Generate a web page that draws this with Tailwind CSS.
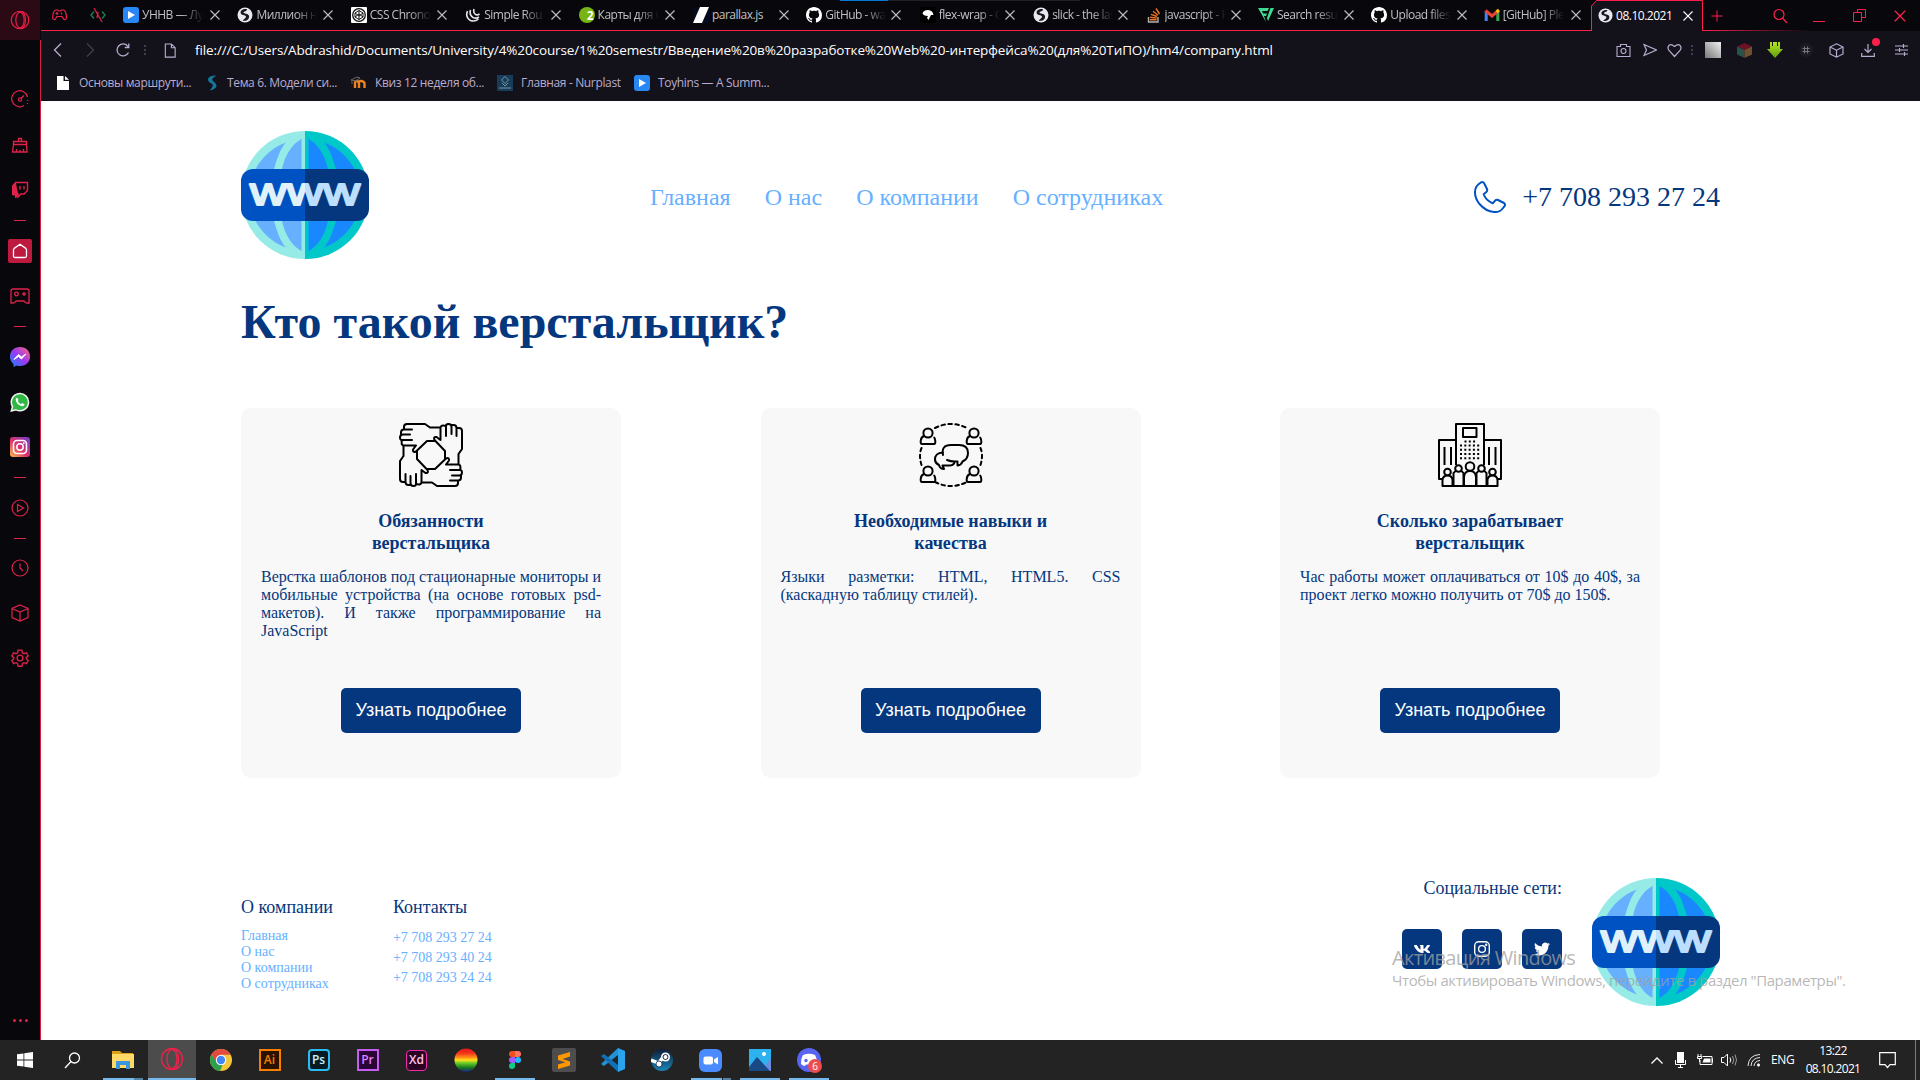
<!DOCTYPE html>
<html lang="ru">
<head>
<meta charset="utf-8">
<title>08.10.2021</title>
<script src="https://cdn.jsdelivr.net/npm/@tailwindcss/browser@4"></script>
</head>
<body class="w-[1920px] h-[1080px] overflow-hidden bg-[#08080c] flex flex-col font-['Open_Sans',sans-serif]">

<!-- Shared icons -->
<svg width="0" height="0" class="absolute">
  <defs>
    <linearGradient id="wwwFill" gradientUnits="userSpaceOnUse" x1="0" y1="0" x2="128" y2="0"><stop offset=".5" stop-color="#e0f1fa"/><stop offset=".5" stop-color="#bddfff"/></linearGradient>
    <linearGradient id="silver" x1="0" y1="1" x2="1" y2="0"><stop stop-color="#777"/><stop offset="1" stop-color="#f0f0f0"/></linearGradient>
    <linearGradient id="insta" x1="0" y1="1" x2="1" y2="0"><stop stop-color="#fdc04b"/><stop offset=".45" stop-color="#e1306c"/><stop offset="1" stop-color="#6a3fd0"/></linearGradient>
    <linearGradient id="msg" x1="0" y1="1" x2="1" y2="0"><stop stop-color="#0a8cff"/><stop offset=".5" stop-color="#9a38f5"/><stop offset="1" stop-color="#ff6b70"/></linearGradient>
    <linearGradient id="rainbow" x1="0" y1="0" x2="0" y2="1"><stop stop-color="#e01b1b"/><stop offset=".2" stop-color="#f4321c"/><stop offset=".38" stop-color="#ff8a15"/><stop offset=".5" stop-color="#ffe11a"/><stop offset=".65" stop-color="#5bc628"/><stop offset=".85" stop-color="#15701b"/><stop offset="1" stop-color="#1b2a9c"/></linearGradient>
    <linearGradient id="steam" x1="0" y1="0" x2="0" y2="1"><stop stop-color="#101c38"/><stop offset="1" stop-color="#1b86b8"/></linearGradient>
    <linearGradient id="lime" x1="0" y1="0" x2="0" y2="1"><stop stop-color="#b4e620"/><stop offset="1" stop-color="#5e9c10"/></linearGradient>
  </defs>
  <symbol id="globe" viewBox="0 0 128 128">
    <path d="M64 0A64 64 0 0 0 64 128Z" fill="#96ebe6"/><path d="M64 0A64 64 0 0 1 64 128Z" fill="#00c8c8"/>
    <g fill="#66b0ff"><path d="M45 11.5C32 16 21 26 14.5 38H33C36 28 39 18 45 11.5ZM60.5 8C51 13 44 24 41 38H60.5Z"/><path d="M45 116.500C32 112 21 102 14.500 90H33C36 100 39 110 45 116.500ZM60.500 120C51 115 44 104 41 90H60.500Z"/></g>
    <g fill="#1988ff"><path d="M83 11.500C96 16 107 26 113.500 38H95C92 28 89 18 83 11.500ZM67.500 8C77 13 84 24 87 38H67.500Z"/><path d="M83 116.500C96 112 107 102 113.500 90H95C92 100 89 110 83 116.500ZM67.500 120C77 115 84 104 87 90H67.500Z"/></g>
    <path d="M64 38H12A12 12 0 0 0 0 50V78A12 12 0 0 0 12 90H64Z" fill="#0052c2"/><path d="M64 38H116A12 12 0 0 1 128 50V78A12 12 0 0 1 116 90H64Z" fill="#05377e"/>
    <text x="9" y="73.500" textLength="110" lengthAdjust="spacingAndGlyphs" font-family="Liberation Sans, sans-serif" font-size="38" fill="url(#wwwFill)" stroke="url(#wwwFill)" stroke-width="2" stroke-linejoin="round">www</text>
  </symbol>
  <symbol id="opera" viewBox="0 0 24 24"><g fill="none" stroke="currentColor" stroke-width="1.300"><circle cx="12" cy="12" r="10.500"/><ellipse cx="12" cy="12" rx="5" ry="9.500"/><path d="M14 1.800C20 5 20 19 14 22.200"/></g></symbol>
  <symbol id="x" viewBox="0 0 12 12"><path d="M1.500 1.500l9 9M10.500 1.500l-9 9" stroke="currentColor" stroke-width="1.100" fill="none"/></symbol>
  <symbol id="world" viewBox="0 0 16 16"><circle cx="8" cy="8" r="7.500" fill="#e8e8ee"/><path d="M10 2.200C7 1.500 3.500 3 3.600 5.500C3.700 8.500 8.500 7.800 9 9.500C9.300 11 7 12 5.500 13.500C10.500 15 12.500 11.500 12 8.800C11 6 7 7.200 6.500 5.500C6.800 4 10 4.500 10 2.200Z" fill="#16161e"/></symbol>
  <symbol id="github" viewBox="0 0 16 16"><path fill="#fff" d="M8 0C3.580 0 0 3.580 0 8c0 3.540 2.290 6.530 5.470 7.590.4.070.55-.17.55-.38 0-.19-.01-.82-.01-1.490-2.010.37-2.530-.49-2.690-.94-.09-.23-.48-.94-.82-1.130-.28-.15-.68-.52-.01-.53.63-.01 1.080.58 1.230.82.72 1.210 1.870.87 2.330.66.070-.52.28-.87.51-1.070-1.780-.2-3.640-.89-3.640-3.950 0-.87.31-1.590.82-2.150-.08-.2-.36-1.020.08-2.120 0 0 .67-.21 2.200.82.64-.18 1.320-.27 2-.27.68 0 1.360.09 2 .27 1.530-1.040 2.200-.82 2.200-.82.44 1.100.16 1.920.08 2.120.51.56.82 1.270.82 2.150 0 3.070-1.870 3.750-3.650 3.950.29.25.54.73.54 1.480 0 1.070-.01 1.930-.01 2.200 0 .21.15.46.55.38A8.010 8.010 0 0 0 16 8c0-4.420-3.580-8-8-8z"/></symbol>
  <symbol id="play" viewBox="0 0 16 16"><rect width="16" height="16" rx="3" fill="#2787f5"/><path d="M5 4l7 4-7 4z" fill="#fff"/></symbol>
  <symbol id="file" viewBox="0 0 14 16"><path d="M2 1h6.500L12.500 5v10H2zM8.500 1v4h4" fill="none" stroke="currentColor" stroke-width="1.200"/></symbol>
  <symbol id="person" viewBox="0 0 18 18"><g fill="none" stroke="#000" stroke-width="2"><circle cx="9" cy="6" r="4.600"/><path d="M5 9Q2 10 1.700 14Q1.500 17 3 17H15Q16.500 17 16.300 14Q16 11.500 15.200 10.500"/></g></symbol>
</svg>

<div class="flex h-[1040px]">
  <!-- Browser sidebar -->
  <aside class="w-[41px] shrink-0 bg-[#08080c] text-[#e0224a] flex flex-col">
    <div class="h-10 w-10 bg-[#2b0a16] flex items-center justify-center text-[#f0204a]"><svg class="size-5"><use href="#opera"/></svg></div>
    <div class="grow w-[41px] border-r border-[#d81c44] flex flex-col items-center">
      <div class="h-[82px] pt-[36px] flex items-center"><svg class="size-[18px]" viewBox="0 0 18 18" fill="none" stroke="currentColor" stroke-width="1.200"><path d="M13 15.500A8 8 0 1 1 16.500 7"/><circle cx="9" cy="9.500" r="1.600"/><path d="M10 8.500l3-3M16.800 10v1M16.500 13v1"/></svg></div>
      <div class="h-[45px] flex items-center"><svg class="size-[18px]" viewBox="0 0 18 18" fill="none" stroke="currentColor" stroke-width="1.300"><path d="M7.500 5V2.500h3V5M2.500 5.500h13v3h-13zM2.500 8.500L1.500 16h14.500l-.5-7.500M5.500 16v-3M9 16v-2M12.500 16v-3"/></svg></div>
      <div class="h-[45px] flex items-center"><svg class="size-[18px]" viewBox="0 0 18 18" fill="none" stroke="currentColor" stroke-width="1.400"><path d="M4.500 1.500h12v8l-3.500 3.500h-3L7 16v-3H4.500z"/><path d="M4.500 1.500L1.500 4.500v9.500h3V17l3-3" fill="currentColor" stroke-width="1"/><path d="M9 5v3.500M13 5v3.500"/></svg></div>
      <div class="h-[16px] flex items-center"><div class="h-px w-3 bg-current"></div></div>
      <div class="h-[45px] flex items-center"><div class="size-6 rounded-xs bg-[#be1a40] flex items-center justify-center"><svg class="size-4" viewBox="0 0 16 16" fill="none" stroke="#fff" stroke-width="1.300" stroke-linejoin="round"><path d="M3 14.500Q1.500 14.500 1.500 13V7Q1.500 6 2.200 5.400L8 1.200l5.800 4.200q.7.600.7 1.600v6q0 1.500-1.500 1.500z"/></svg></div></div>
      <div class="h-[45px] flex items-center"><svg class="w-5 h-4" viewBox="0 0 20 16" fill="none" stroke="currentColor" stroke-width="1.300"><path d="M3 1h14q2 0 2 2v12h-2q-2 0-3-2H6q-1 2-3 2H1V3q0-2 2-2z"/><circle cx="6.500" cy="6" r="1.800"/><path d="M12 6h4M14 4v4"/></svg></div>
      <div class="h-[16px] flex items-center"><div class="h-px w-3 bg-current"></div></div>
      <div class="h-[45px] flex items-center"><svg class="size-5" viewBox="0 0 20 20"><path d="M10 0C4 0 0 4 0 9.500C0 12.500 1.300 15 3.500 17V20L6.500 18.500Q8 19 10 19C16 19 20 15 20 9.500S16 0 10 0z" fill="url(#msg)"/><path d="M4 12.500l4.500-5 3 2.500 4.500-3-4.500 5-3-2.500z" fill="#fff" stroke="#fff"/></svg></div>
      <div class="h-[45px] flex items-center"><svg class="size-5" viewBox="0 0 20 20"><path d="M1.300 19l1.200-4.500a8.600 8.600 0 1 1 3.500 3.300z" fill="#2fb845" stroke="#f2f2f2" stroke-width="1.500"/><path d="M7 5.500L5.800 6.700C5.200 10.500 9.500 14.500 13 14.200L14.800 12.500 12.300 11l-1.200 1.200C9.500 11.500 8.500 10.500 7.800 9L8.600 8z" fill="#fff"/></svg></div>
      <div class="h-[45px] flex items-center"><svg class="size-5" viewBox="0 0 20 20"><rect width="20" height="20" rx="3" fill="url(#insta)"/><rect x="3.500" y="3.500" width="13" height="13" rx="3.500" fill="none" stroke="#fff" stroke-width="1.600"/><circle cx="10" cy="10" r="3.200" fill="none" stroke="#fff" stroke-width="1.500"/><circle cx="13.800" cy="6.200" r=".9" fill="#fff"/></svg></div>
      <div class="h-[16px] flex items-center"><div class="h-px w-3 bg-current"></div></div>
      <div class="h-[45px] flex items-center"><svg class="size-[18px]" viewBox="0 0 18 18" fill="none" stroke="currentColor" stroke-width="1.200"><circle cx="9" cy="9" r="8"/><path d="M6.500 5.500L12.500 9l-6 3.500z"/></svg></div>
      <div class="h-[16px] flex items-center"><div class="h-px w-3 bg-current"></div></div>
      <div class="h-[44px] flex items-center"><svg class="size-[18px]" viewBox="0 0 18 18" fill="none" stroke="currentColor" stroke-width="1.200"><circle cx="9" cy="9" r="8"/><path d="M9 4.500V9l3 3"/></svg></div>
      <div class="h-[45px] flex items-center"><svg class="size-[18px]" viewBox="0 0 18 18" fill="none" stroke="currentColor" stroke-width="1.200"><path d="M9 1l8 3.500v9L9 17l-8-3.500v-9zM1 4.500L9 8l8-3.500M9 8v9"/></svg></div>
      <div class="h-[45px] flex items-center"><svg class="size-[18px]" viewBox="0 0 24 24" fill="none" stroke="currentColor" stroke-width="1.800"><circle cx="12" cy="12" r="3.800"/><path d="M9.500 1.500h5l.7 3.500 2 1.200 3.300-1.200 2.500 4.200-2.700 2.300v1.500l2.700 2.300-2.500 4.200-3.300-1.200-2 1.200-.7 3.500h-5L8.800 19.500l-2-1.200-3.300 1.200L1 15.300 3.700 13v-1.500L1 9.200 3.500 5l3.300 1.200 2-1.200z"/></svg></div>
      <div class="mt-auto h-[40px] flex items-center gap-[3px]"><i class="size-[3px] rounded-full bg-current"></i><i class="size-[3px] rounded-full bg-current"></i><i class="size-[3px] rounded-full bg-current"></i></div>
    </div>
  </aside>

  <div class="w-[1879px] flex flex-col">
    <!-- Tab strip -->
    <div class="relative h-[31px] flex items-stretch text-xs tracking-[-0.5px] text-[#c0c0c4]">
      <div class="absolute left-[799px] top-0 h-px w-[48px] bg-[#0078d7]"></div>
      <div class="absolute left-[847px] top-0 h-px w-[192px] bg-[#222226]"></div>
      <div class="w-[76px] flex items-center gap-[23px] pl-[11px] border-b border-[#ff1f4b] text-[#f0204a]">
        <svg class="w-[15px] h-[12px] shrink-0" viewBox="0 0 15 12" fill="none" stroke="currentColor" stroke-width="1.200"><path d="M3.500 1h2l1 1h2l1-1h2q3 1 3 8.500q-2 2.500-3.500-.5l-1-1.500h-5L4 9Q2.500 12 .7 9.500Q.7 2 3.500 1z"/><path d="M3.500 4.500h3M5 3v3M9.500 3.500v2"/></svg>
        <svg class="size-4 shrink-0" viewBox="0 0 16 16" fill="none" stroke-width="1.400"><path d="M4 4.500L1 8l3 3.500M12 4.500L15 8l-3 3.500" stroke="#16804c"/><path d="M4 1l8 14M7 11l1-6" stroke="#d02045"/></svg>
      </div>
      <div class="w-[113.400px] pl-[6px] border-b border-[#ff1f4b] flex items-center"><svg class="size-4 shrink-0"><use href="#play"/></svg><span class="ml-[3px] w-[61px] overflow-hidden whitespace-nowrap mask-r-from-65%">УННВ — Лу</span><svg class="size-3 ml-[6px]"><use href="#x"/></svg></div>
      <div class="w-[113.400px] pl-[7px] border-b border-[#ff1f4b] flex items-center"><svg class="size-4 shrink-0"><use href="#world"/></svg><span class="ml-[3px] w-[61px] overflow-hidden whitespace-nowrap mask-r-from-65%">Миллион на</span><svg class="size-3 ml-[5px]"><use href="#x"/></svg></div>
      <div class="w-[113.400px] pl-[7px] border-b border-[#ff1f4b] flex items-center"><svg class="size-4 shrink-0" viewBox="0 0 16 16"><rect width="16" height="16" rx="1" fill="#fff"/><g fill="none" stroke="#111" stroke-width="1.300"><circle cx="8" cy="8" r="6.300"/><path d="M8 3.500l4 2.500v4l-4 2.500L4 10V6zM8 3.500V7M8 9v3.500M4 6l4 3 4-3M4 10l4-3 4 3" stroke-width="1"/></g></svg><span class="ml-[3px] w-[61px] overflow-hidden whitespace-nowrap mask-r-from-65%">CSS Chronol</span><svg class="size-3 ml-[5px]"><use href="#x"/></svg></div>
      <div class="w-[113.400px] pl-[8px] border-b border-[#ff1f4b] flex items-center"><svg class="size-4 shrink-0" viewBox="0 0 16 16" fill="none" stroke="#e4e4e8" stroke-width="1.600"><path d="M2.500 4Q0 10 5.500 13.500Q10 15 13.500 12M5.500 3Q4 8 8 10.500Q11 12 14 10M9 2Q8 6 10.500 7.500Q12.500 8.500 14.500 7"/></svg><span class="ml-[3px] w-[61px] overflow-hidden whitespace-nowrap mask-r-from-65%">Simple Rou</span><svg class="size-3 ml-[5px]"><use href="#x"/></svg></div>
      <div class="w-[113.400px] pl-[8px] border-b border-[#ff1f4b] flex items-center"><svg class="size-4 shrink-0" viewBox="0 0 16 16"><circle cx="8" cy="8" r="8" fill="#78b414"/><text x="11" y="12.500" text-anchor="middle" font-size="12" font-weight="bold" fill="#fff">2</text></svg><span class="ml-[3px] w-[61px] overflow-hidden whitespace-nowrap mask-r-from-65%">Карты для С</span><svg class="size-3 ml-[5px]"><use href="#x"/></svg></div>
      <div class="w-[113.400px] pl-[9px] border-b border-[#ff1f4b] flex items-center"><svg class="size-4 shrink-0" viewBox="0 0 16 16"><rect width="16" height="16" fill="#050a1c"/><path d="M7 0h9L9 16H0z" fill="#fff"/></svg><span class="ml-[3px] w-[61px] overflow-hidden whitespace-nowrap">parallax.js</span><svg class="size-3 ml-[5px]"><use href="#x"/></svg></div>
      <div class="w-[113.400px] pl-[9px] border-b border-[#ff1f4b] flex items-center"><svg class="size-4 shrink-0"><use href="#github"/></svg><span class="ml-[3px] w-[61px] overflow-hidden whitespace-nowrap mask-r-from-65%">GitHub - wa</span><svg class="size-3 ml-[4px]"><use href="#x"/></svg></div>
      <div class="w-[113.400px] pl-[9px] border-b border-[#ff1f4b] flex items-center"><svg class="size-4 shrink-0" viewBox="0 0 16 16"><rect width="16" height="16" fill="#000"/><path d="M2.500 6Q4 3 8 3Q13 3.500 13.500 8H11L8.500 13L7 11L8 9Q3 9 2.500 6z" fill="#fff"/></svg><span class="ml-[3px] w-[61px] overflow-hidden whitespace-nowrap mask-r-from-65%">flex-wrap - C</span><svg class="size-3 ml-[4px]"><use href="#x"/></svg></div>
      <div class="w-[113.400px] pl-[9px] border-b border-[#ff1f4b] flex items-center"><svg class="size-4 shrink-0"><use href="#world"/></svg><span class="ml-[3px] w-[61px] overflow-hidden whitespace-nowrap mask-r-from-65%">slick - the las</span><svg class="size-3 ml-[4px]"><use href="#x"/></svg></div>
      <div class="w-[113.400px] pl-[8px] border-b border-[#ff1f4b] flex items-center"><svg class="size-4 shrink-0" viewBox="0 0 16 16" fill="none" stroke-width="1.400"><path d="M2.500 10v5h9.500v-5" stroke="#b0b3b6"/><path d="M4 12.700h6.500M4.200 10.200l6.500.9M5 7.300l6 2.200M7 4.200l5 4M10 1.500l3.500 5.500" stroke="#f0741e"/></svg><span class="ml-[3px] w-[61px] overflow-hidden whitespace-nowrap mask-r-from-65%">javascript - H</span><svg class="size-3 ml-[4px]"><use href="#x"/></svg></div>
      <div class="w-[113.400px] pl-[7px] border-b border-[#ff1f4b] flex items-center"><svg class="size-4 shrink-0" viewBox="0 0 16 16"><path d="M0 1h11l-1.500 3H4l1.200 2.500H9L8 9H6l2 6zM12.500 1H16L10 14 9 11z" fill="#3fd992"/></svg><span class="ml-[3px] w-[61px] overflow-hidden whitespace-nowrap mask-r-from-65%">Search resul</span><svg class="size-3 ml-[5px]"><use href="#x"/></svg></div>
      <div class="w-[113.400px] pl-[7px] border-b border-[#ff1f4b] flex items-center"><svg class="size-4 shrink-0"><use href="#github"/></svg><span class="ml-[3px] w-[61px] overflow-hidden whitespace-nowrap mask-r-from-65%">Upload files</span><svg class="size-3 ml-[5px]"><use href="#x"/></svg></div>
      <div class="w-[113.400px] pl-[6px] border-b border-[#ff1f4b] flex items-center"><svg class="size-4 shrink-0" viewBox="0 0 16 16" fill="none" stroke-width="3"><path d="M2.200 14V4" stroke="#4285f4"/><path d="M13.800 14V4" stroke="#34a853"/><path d="M1.500 3.500L8 9l6.500-5.500" stroke="#ea4335"/><path d="M12.500 5l2.500-2" stroke="#fbbc04"/></svg><span class="ml-[3px] w-[61px] overflow-hidden whitespace-nowrap mask-r-from-65%">[GitHub] Ple</span><svg class="size-3 ml-[6px]"><use href="#x"/></svg></div>
      <div class="relative w-[112px] flex items-center pl-[7px] text-white">
        <svg class="absolute inset-0 w-[112px] h-[31px]" viewBox="0 0 112 31"><path d="M.5 31V6L5.500.5H111.500V31" fill="#13111a" stroke="#ff1f4b"/></svg>
        <svg class="relative size-[15px] shrink-0"><use href="#world"/></svg><span class="relative ml-[3px] w-[66px] whitespace-nowrap">08.10.2021</span><svg class="relative size-3"><use href="#x"/></svg>
      </div>
      <div class="grow flex items-center text-[#ff1f4b] bg-[linear-gradient(to_right,#ff1f4b,transparent_50%)] bg-[length:100%_1px] bg-no-repeat bg-bottom">
        <svg class="size-3 ml-[8px]" viewBox="0 0 12 12"><path d="M6 .5v11M.5 6h11" stroke="currentColor"/></svg>
        <svg class="size-4 ml-[49px]" viewBox="0 0 16 16" fill="none" stroke="currentColor" stroke-width="1.200"><circle cx="7" cy="6.500" r="5"/><path d="M10.500 10l4.500 5"/></svg>
        <div class="ml-[25px] mt-[11px] h-px w-3 bg-current"></div>
        <svg class="size-[13px] ml-[28px]" viewBox="0 0 13 13" fill="none" stroke="currentColor"><path d="M4.500 3.500v-3h8v8h-4M.5 3.500h8v9h-8z"/></svg>
        <svg class="size-[14px] ml-[27px]"><use href="#x"/></svg>
      </div>
    </div>

    <!-- Address bar -->
    <div class="h-[38px] bg-[#13111a] flex items-center text-[#b9adcf]">
      <svg class="w-[9px] h-[14px] ml-[12px]" viewBox="0 0 9 14" fill="none" stroke="currentColor" stroke-width="1.300"><path d="M8 .5L1.500 7 8 13.500"/></svg>
      <svg class="w-[9px] h-[14px] ml-[24px] text-[#433d50]" viewBox="0 0 9 14" fill="none" stroke="currentColor" stroke-width="1.300"><path d="M1 .5L7.500 7 1 13.500"/></svg>
      <svg class="size-[14px] ml-[21px]" viewBox="0 0 14 14" fill="none" stroke="currentColor" stroke-width="1.300"><path d="M12.500 9.500A6 6 0 1 1 12 3.500M12.800 .5v4h-4"/></svg>
      <svg class="w-[2px] h-[10px] ml-[14px]" viewBox="0 0 2 10" fill="#433d50"><path d="M0 0h2v2H0zM0 4h2v2H0zM0 8h2v2H0z"/></svg>
      <svg class="w-[14px] h-[15px] ml-[17px]"><use href="#file"/></svg>
      <span class="ml-[18px] w-[1090px] whitespace-nowrap text-[13.5px] tracking-[-0.12px] text-white">file:///C:/Users/Abdrashid/Documents/University/4%20course/1%20semestr/Введение%20в%20разработке%20Web%20-интерфейса%20(для%20ТиПО)/hm4/company.html</span>
      <div class="ml-auto pr-[12px] flex items-center">
        <svg class="size-[15px]" viewBox="0 0 15 15" fill="none" stroke="currentColor" stroke-width="1.100"><path d="M1 3.500h3.500v-2h6v2H14v10H1z"/><circle cx="7.500" cy="8" r="2.500"/></svg>
        <svg class="size-[14px] ml-[12px]" viewBox="0 0 14 14" fill="none" stroke="currentColor" stroke-width="1.200"><path d="M1 1.500L13.500 7 1 12.500 3.500 7z"/></svg>
        <svg class="size-[15px] ml-[10px]" viewBox="0 0 15 15" fill="none" stroke="currentColor" stroke-width="1.200"><path d="M7.500 13.500L2 7.500Q0 4.500 2 2.500T7.500 3.500Q11 .500 13 2.500T13 7.500z"/></svg>
        <svg class="w-[2px] h-[10px] ml-[9px]" viewBox="0 0 2 10" fill="#433d50"><path d="M0 0h2v2H0zM0 4h2v2H0zM0 8h2v2H0z"/></svg>
        <svg class="size-4 ml-[12px]" viewBox="0 0 16 16"><rect width="16" height="16" fill="url(#silver)"/></svg>
        <svg class="size-[15px] ml-[16px]" viewBox="0 0 15 15"><path d="M7.500 0L15 3.500 7.500 7 0 3.500z" fill="#6b1324"/><path d="M0 3.500L7.500 7v8L0 11.500z" fill="#28524a"/><path d="M15 3.500L7.500 7v8l7.500-3.500z" fill="#70502f"/></svg>
        <svg class="size-4 ml-[15px]" viewBox="0 0 16 16"><path d="M3 0h2v4h1V0h4v4h1V0h2v7h3l-8 9-8-9h3z" fill="url(#lime)"/></svg>
        <svg class="size-[14px] ml-[16px]" viewBox="0 0 14 14"><circle cx="7" cy="7" r="7" fill="#1c1b21"/><path d="M5.500 3.500v7M8.500 3.500v7M3.500 5.500h7M3.500 8.500h7" stroke="#77737f"/></svg>
        <svg class="size-[15px] ml-[16px]" viewBox="0 0 15 15" fill="none" stroke="currentColor" stroke-width="1.200"><path d="M7.500 .8L14 4v7l-6.500 3.200L1 11V4zM1 4l6.500 3.200L14 4M7.500 7.200v7"/></svg>
        <div class="relative ml-[17px]"><svg class="size-[14px]" viewBox="0 0 14 14" fill="none" stroke="currentColor" stroke-width="1.200"><path d="M7 1v8.500M3.500 6L7 9.500 10.500 6M.7 10v3.300h12.600V10"/></svg><i class="absolute left-[11px] -top-[5px] size-2 rounded-full bg-[#ff1f4b]"></i></div>
        <svg class="w-[13px] h-[12px] ml-[20px]" viewBox="0 0 13 12" fill="none" stroke="currentColor" stroke-width="1.100"><path d="M0 2h13M0 6h13M0 10h13M8.500 0v4M4.500 4v4M9.500 8v4"/></svg>
      </div>
    </div>

    <!-- Bookmarks -->
    <div class="h-[32px] pb-[4px] bg-[#13111a] flex items-center text-xs tracking-[-0.35px] whitespace-nowrap text-[#b9adcf]">
      <div class="w-[149px] pl-[16px] flex items-center"><svg class="w-[12px] h-[14px] mr-[10px] shrink-0" viewBox="0 0 12 14"><path d="M0 0h6.500v5H12v9H0zM8 0l4 3.800H8z" fill="#fff"/></svg>Основы маршрути...</div>
      <div class="w-[148px] pl-[14px] flex items-center"><svg class="size-4 mr-[7px] shrink-0" viewBox="0 0 16 16"><path d="M12.500 .5Q4 .5 4 4.500Q4 7 7.500 8.500T5.500 15.500Q12.500 14 12.500 10.500Q12 8 9 6T12.500 .5z" fill="#14789c"/></svg>Тема 6. Модели си...</div>
      <div class="w-[148px] pl-[13px] flex items-center"><svg class="size-4 mr-[8px] shrink-0" viewBox="0 0 16 16" fill="none"><path d="M4 13V7.500Q4.500 5.500 6 6T8 8v5M8 8q0-2.500 2.500-2T13.500 8v5" stroke="#f08320" stroke-width="2.400"/><path d="M0 5l6-3 3 1-4 3zM1 5v4" stroke="#666" stroke-width="1"/></svg>Квиз 12 неделя об...</div>
      <div class="w-[138px] pl-[11px] flex items-center"><svg class="size-4 mr-[8px] shrink-0" viewBox="0 0 16 16"><rect width="16" height="16" fill="#173c58"/><path d="M8 1.500L11.500 5 8 8.500 4.500 5zM5 8l3 3 3-3M2 13h12" fill="none" stroke="#7894a8" stroke-width="1"/></svg>Главная - Nurplast</div>
      <div class="pl-[10px] flex items-center"><svg class="size-4 mr-[8px] shrink-0"><use href="#play"/></svg>Toyhins — A Summ...</div>
    </div>

    <!-- Web page -->
    <div class="relative h-[939px] bg-white px-[200px] pt-[30px] text-[#05377e] font-['Liberation_Serif',serif]">
      <header class="h-[128px] flex items-center justify-between">
        <svg class="size-[128px]"><use href="#globe"/></svg>
        <nav class="mr-[30px] pt-[3px] flex gap-[34px] text-2xl text-[#66b0ff]"><a>Главная</a><a>О нас</a><a>О компании</a><a>О сотрудниках</a></nav>
        <div class="pt-[3px] flex items-center gap-4 text-[28px]"><svg class="size-8" viewBox="0 0 32 32" fill="none" stroke="#0052c2" stroke-width="2" stroke-linejoin="round"><path d="M4.500 3.300L7.200 1.300Q8.800.5 10 2L13 8Q13.700 9.700 12.300 11L9.700 13.200Q11.500 19 18.800 22.300L21 19.700Q22.300 18.300 24 19L30 22Q31.500 23.200 30.700 24.800L28.700 27.500Q25.500 31.500 20 31Q12 30.500 5.500 23Q.8 17 1 11Q1.200 6 4.500 3.300Z"/></svg><span>+7 708 293 27 24</span></div>
      </header>
      <h1 class="mt-[35px] text-5xl leading-[55px] font-bold">Кто такой верстальщик?</h1>

      <main class="mt-[59px] w-[1419px] flex justify-between">
        <section class="w-[380px] h-[370px] rounded-[10px] bg-[#f8f8f8] px-5 pt-[15px] flex flex-col items-center">
          <svg class="size-16" viewBox="0 0 64 64" fill="none" stroke="#000" stroke-width="2" stroke-linejoin="round" stroke-linecap="round">
            <g id="hand"><path d="M41 4.500H31L26 1H8Q5 1 5 4V6.500M13 6.500H5Q2 6.500 2 9.500V11.500M11 11.500H4Q1 11.500 1 14.500T4 17H13M3 17Q1.500 22.500 5 22.500H17L14 26.500Q13.500 30 17 28.500L28 18H36"/></g>
            <use href="#hand" transform="rotate(90 32 32)"/><use href="#hand" transform="rotate(180 32 32)"/><use href="#hand" transform="rotate(270 32 32)"/>
          </svg>
          <h2 class="mt-[24px] w-[220px] text-center text-lg leading-[21.500px] font-bold">Обязанности верстальщика</h2>
          <p class="mt-[14px] h-[72px] w-full text-justify text-base leading-[18px]">Верстка шаблонов под стационарные мониторы и мобильные устройства (на основе готовых psd-макетов). И также программирование на JavaScript</p>
          <button class="mt-[48px] pb-[2px] h-[45px] w-[180px] rounded-[5px] bg-[#05377e] text-white text-lg font-['Liberation_Sans',sans-serif]">Узнать подробнее</button>
        </section>
        <section class="w-[380px] h-[370px] rounded-[10px] bg-[#f8f8f8] px-5 pt-[15px] flex flex-col items-center">
          <svg class="size-16" viewBox="0 0 64 64" fill="none" stroke="#000" stroke-width="2" stroke-linecap="round" stroke-linejoin="round">
            <g stroke-dasharray="3.500 3.500"><path d="M16 5Q32 -3 48 5M16 59Q32 67 48 59M2.500 25Q-.5 32 2.500 42M61.500 25Q64.500 32 61.500 42"/></g>
            <use href="#person" x="0" y="4" width="18" height="18"/><use href="#person" x="46" y="4" width="18" height="18"/><use href="#person" x="0" y="42" width="18" height="18"/><use href="#person" x="46" y="42" width="18" height="18"/>
            <path d="M24 32Q22 22 32 22H40Q49 22 49 30Q49 36 43.500 38.500Q42.500 42 38.500 42.500V38.500Q32 39 28 37M24 29.500Q15.500 30 16 37Q16.500 40.500 20 42Q21 46 25 46L23.500 42.500H31Q35.500 42 35.500 38.500"/>
          </svg>
          <h2 class="mt-[24px] w-[220px] text-center text-lg leading-[21.500px] font-bold">Необходимые навыки и качества</h2>
          <p class="mt-[14px] h-[72px] w-full text-justify text-base leading-[18px]">Языки разметки: HTML, HTML5. CSS (каскадную таблицу стилей).</p>
          <button class="mt-[48px] pb-[2px] h-[45px] w-[180px] rounded-[5px] bg-[#05377e] text-white text-lg font-['Liberation_Sans',sans-serif]">Узнать подробнее</button>
        </section>
        <section class="w-[380px] h-[370px] rounded-[10px] bg-[#f8f8f8] px-5 pt-[15px] flex flex-col items-center">
          <svg class="size-16" viewBox="0 0 64 64" fill="none" stroke="#000" stroke-width="2" stroke-linejoin="round">
            <path d="M18 42V1H46V42M18 17H1V56H5M46 17H63V56H59M6.500 24V42M13 24V42M51 24V42M57.500 24V42M25 5H38.500V14H25Z"/>
            <path d="M26.500 18.500H38M22 22.500H42M22 26.700H42M22 31H42M22 35.300H42" stroke-dasharray="2 2.300"/>
            <g fill="#f8f8f8"><path d="M15.500 63V50Q20.500 43.500 25.500 50V63ZM38.500 63V50Q43.500 43.500 48.500 50V63Z"/><circle cx="20.500" cy="45.500" r="3.300"/><circle cx="43.500" cy="45.500" r="3.300"/><path d="M4.500 63V57Q5 52.500 9.500 52.500T14.500 57V63ZM49.500 63V57Q50 52.500 54.500 52.500T59.500 57V63Z"/><circle cx="9.500" cy="49" r="3.300"/><circle cx="54.500" cy="49" r="3.300"/><path d="M26 63V54Q26.500 48 32 48T38 54V63Z"/><circle cx="32" cy="43.500" r="4.300"/></g><path d="M4 63H60"/>
          </svg>
          <h2 class="mt-[24px] w-[220px] text-center text-lg leading-[21.500px] font-bold">Сколько зарабатывает верстальщик</h2>
          <p class="mt-[14px] h-[72px] w-full text-justify text-base leading-[18px]">Час работы может оплачиваться от 10$ до 40$, за проект легко можно получить от 70$ до 150$.</p>
          <button class="mt-[48px] pb-[2px] h-[45px] w-[180px] rounded-[5px] bg-[#05377e] text-white text-lg font-['Liberation_Sans',sans-serif]">Узнать подробнее</button>
        </section>
      </main>

      <footer class="mt-[100px] flex justify-between">
        <div class="pt-[19px] flex gap-[60px]">
          <div><h3 class="text-lg leading-[21px]">О компании</h3><div class="mt-[10px] flex flex-col text-sm leading-4 text-[#66b0ff]"><a>Главная</a><a>О нас</a><a>О компании</a><a>О сотрудниках</a></div></div>
          <div><h3 class="text-lg leading-[21px]">Контакты</h3><div class="mt-[10px] flex flex-col text-sm leading-5 text-[#66b0ff]"><a>+7 708 293 27 24</a><a>+7 708 293 40 24</a><a>+7 708 293 24 24</a></div></div>
        </div>
        <div class="flex gap-[30px]">
          <div class="flex flex-col items-end">
            <h3 class="text-lg leading-[21px]">Социальные сети:</h3>
            <div class="mt-[30px] flex gap-5">
              <a class="size-10 rounded-[5px] bg-[#05377e] flex items-center justify-center"><svg class="w-4 h-[8px] mr-px" viewBox="18 96 530 320" preserveAspectRatio="none" fill="#fff"><path d="M545 117.700c3.700-12.500 0-21.700-17.800-21.700h-58.900c-15 0-21.900 7.900-25.600 16.700 0 0-30 73.100-72.400 120.500-13.700 13.700-20 18.100-27.500 18.100-3.700 0-9.400-4.400-9.400-16.900V117.700c0-15-4.200-21.700-16.600-21.700h-92.600c-9.400 0-15 7-15 13.500 0 14.200 21.200 17.500 23.400 57.500v86.800c0 19-3.400 22.500-10.900 22.500-20 0-68.600-73.400-97.400-157.400-5.800-16.300-11.500-22.900-26.600-22.900H38.800c-16.800 0-20.200 7.900-20.200 16.700 0 15.600 20 93.100 93.100 195.500C160.400 378.100 229 416 291.400 416c37.500 0 42.100-8.400 42.100-22.900 0-66.800-3.400-73.100 15.400-73.100 8.700 0 23.700 4.400 58.700 38.100 40 40 46.600 57.900 69 57.900h58.900c16.800 0 25.300-8.400 20.400-25-11.200-34.900-86.900-106.700-90.300-111.500-8.700-11.200-6.200-16.200 0-26.200.1-.1 72-101.300 79.400-135.600z"/></svg></a>
              <a class="size-10 rounded-[5px] bg-[#05377e] flex items-center justify-center"><svg class="size-4" viewBox="0 0 16 16" fill="none" stroke="#fff" stroke-width="1.400"><rect x=".7" y=".7" width="14.600" height="14.600" rx="4"/><circle cx="8" cy="8" r="3.400"/><circle cx="12.200" cy="3.800" r=".5"/></svg></a>
              <a class="size-10 rounded-[5px] bg-[#05377e] flex items-center justify-center"><svg class="size-4" viewBox="0 0 24 24" fill="#fff"><path d="M23.953 4.570a10 10 0 01-2.825.775 4.958 4.958 0 002.163-2.723c-.951.555-2.005.959-3.127 1.184a4.920 4.920 0 00-8.384 4.482C7.690 8.095 4.067 6.130 1.640 3.162a4.822 4.822 0 00-.666 2.475c0 1.710.87 3.213 2.188 4.096a4.904 4.904 0 01-2.228-.616v.06a4.923 4.923 0 003.946 4.827 4.996 4.996 0 01-2.212.085 4.936 4.936 0 004.604 3.417 9.867 9.867 0 01-6.102 2.105c-.39 0-.779-.023-1.170-.067a13.995 13.995 0 007.557 2.209c9.053 0 13.998-7.496 13.998-13.985 0-.21 0-.42-.015-.63A9.935 9.935 0 0024 4.590z"/></svg></a>
            </div>
          </div>
          <svg class="size-[128px]"><use href="#globe"/></svg>
        </div>
      </footer>

      <!-- Activation notice -->
      <div class="absolute left-[1351px] top-[844px] whitespace-nowrap text-[#a0a0a0]/75 font-['Open_Sans',sans-serif]">
        <div class="text-xl leading-[26px] tracking-[-0.65px]">Активация Windows</div>
        <div class="text-[15px] leading-[18px] tracking-[-0.4px]">Чтобы активировать Windows, перейдите в раздел "Параметры".</div>
      </div>
    </div>
  </div>
</div>

<!-- Taskbar -->
<div class="h-10 bg-[#232323] flex text-white">
  <div class="w-[49px] flex items-center justify-center"><svg class="size-4" viewBox="0 0 16 16" fill="#fff"><path d="M0 2.300l6.500-.9v6.200H0zM7.300 1.300L16 0v7.600H7.300zM0 8.400h6.500v6.200L0 13.700zM7.300 8.400H16V16l-8.700-1.300z"/></svg></div>
  <div class="w-[49px] pr-[2px] flex items-center justify-center"><svg class="size-[17px]" viewBox="0 0 17 17" fill="none" stroke="#fff" stroke-width="1.300"><circle cx="10.500" cy="6" r="5"/><path d="M7 9.500L1 16"/></svg></div>
  <div class="relative w-[49px] flex items-center justify-center"><svg class="w-[22px] h-[20px]" viewBox="0 0 22 20"><path d="M0 1h8l2 2h11v4H0z" fill="#dca017"/><path d="M0 4h22v14H0z" fill="#ffd968"/><path d="M4 11h14v8h-4v-4H8v4H4z" fill="#3b97dd"/></svg><i class="absolute left-[5px] bottom-0 h-[2px] w-[31px] bg-[#76b9ed]"></i><i class="absolute left-[36px] bottom-0 h-[2px] w-[9px] bg-[#5583a6]"></i></div>
  <div class="w-[49px] pl-px flex"><div class="w-12 border-b-2 border-[#76b9ed] bg-[#4c4c4c] flex items-center justify-center text-[#f0204a]"><svg class="size-6"><use href="#opera"/></svg></div></div>
  <div class="w-[49px] flex items-center justify-center"><svg class="size-[22px]" viewBox="0 0 22 22"><circle cx="11" cy="11" r="11" fill="#f5c738"/><path d="M1.500 5.500A11 11 0 0 1 20.600 5.700H11L6 13.500z" fill="#e24a40"/><path d="M1.500 5.500L6.700 13.500L12.500 16L10 22A11 11 0 0 1 1.500 5.500z" fill="#2da04d"/><circle cx="11" cy="11" r="5.200" fill="#fff"/><circle cx="11" cy="11" r="4.200" fill="#4285f4"/></svg></div>
  <div class="w-[49px] flex items-center justify-center"><div class="size-[22px] border-2 border-[#f77f00] bg-[#2b1200] text-[#f77f00] text-[12px] font-semibold leading-[17px] text-center">Ai</div></div>
  <div class="w-[49px] flex items-center justify-center"><div class="size-[22px] rounded-[4px] border-2 border-[#2bbcf2] bg-[#061a24] text-[#c8f0ff] text-[12px] font-semibold leading-[18px] text-center">Ps</div></div>
  <div class="w-[49px] flex items-center justify-center"><div class="size-[22px] border-2 border-[#c45cf0] bg-[#2a0636] text-[#df80ff] text-[12px] font-semibold leading-[17px] text-center">Pr</div></div>
  <div class="w-[49px] flex items-center justify-center"><div class="size-[21px] rounded-[4px] border border-[#f02cb0] bg-[#2a0420] text-[#ffc4f0] text-[12px] font-semibold leading-[18px] text-center">Xd</div></div>
  <div class="w-[49px] flex items-center justify-center"><svg class="size-6" viewBox="0 0 24 24"><circle cx="12" cy="12" r="11.500" fill="url(#rainbow)"/></svg></div>
  <div class="relative w-[49px] flex items-center justify-center"><svg class="w-[12px] h-[18px]" viewBox="0 0 12 18"><path d="M3 0h3v6H3a3 3 0 0 1 0-6z" fill="#f24e1e"/><path d="M6 0h3a3 3 0 0 1 0 6H6z" fill="#ff7262"/><path d="M3 6h3v6H3a3 3 0 0 1 0-6z" fill="#a259ff"/><circle cx="9" cy="9" r="3" fill="#1abcfe"/><path d="M3 12h3v3a3 3 0 1 1-3-3z" fill="#0acf83"/></svg><i class="absolute left-[5px] bottom-0 h-[2px] w-[40px] bg-[#76b9ed]"></i></div>
  <div class="w-[49px] flex items-center justify-center"><svg class="size-6" viewBox="0 0 24 24"><rect width="24" height="24" rx="2" fill="#4d4d4d"/><path d="M18 4v4.500L10.500 11 18 13.500v4L6 21v-4.500l7.500-2.300L6 12V7.500z" fill="#ff9800"/></svg></div>
  <div class="w-[49px] flex items-center justify-center"><svg class="size-6" viewBox="0 0 24 24"><path d="M17 0l7 3v18l-7 3z" fill="#2aa4ec"/><path d="M17 0v7L3 18l-3-2z" fill="#2391d4"/><path d="M17 24v-7L3 6 0 8z" fill="#0f72b8"/></svg></div>
  <div class="w-[49px] flex items-center justify-center"><svg class="size-[22px]" viewBox="0 0 22 22"><circle cx="11" cy="11" r="11" fill="url(#steam)"/><path d="M0 11l7.500 3 4-5" stroke="#fff" stroke-width="3.500" fill="none"/><circle cx="14.500" cy="8" r="4.500" fill="#fff"/><circle cx="14.500" cy="8" r="2.500" fill="#fff" stroke="#17284a"/><circle cx="8" cy="15" r="3" fill="#fff" stroke="#17284a" stroke-width=".8"/></svg></div>
  <div class="relative w-[49px] flex items-center justify-center"><svg class="size-[23px]" viewBox="0 0 23 23"><rect width="23" height="23" rx="6" fill="#4a8cff"/><rect x="4.500" y="7.500" width="9.500" height="8" rx="2" fill="#fff"/><path d="M15 10.500l4-2.500v7.500l-4-2.500z" fill="#fff"/></svg><i class="absolute left-[5px] bottom-0 h-[2px] w-[31px] bg-[#76b9ed]"></i><i class="absolute left-[37px] bottom-0 h-[2px] w-[8px] bg-[#5583a6]"></i></div>
  <div class="relative w-[49px] flex items-center justify-center"><svg class="size-[22px]" viewBox="0 0 22 22"><path d="M0 0h22v22H0z" fill="#2cb2ee"/><path d="M22 9L12 22h10z" fill="#6a8de0"/><path d="M0 18L8 8l13 14H0z" fill="#1a4a85"/><circle cx="15" cy="5" r="2" fill="#fff"/></svg><i class="absolute left-[5px] bottom-0 h-[2px] w-[40px] bg-[#76b9ed]"></i></div>
  <div class="relative w-[49px] flex items-center justify-center"><svg class="size-6" viewBox="0 0 24 24"><circle cx="12" cy="12" r="12" fill="#5865f2"/><path d="M6 7q6-2.500 12 0 2.500 4 2 9-2 2-4 2l-1-1.500h-6L8 18q-2 0-4-2-.5-5 2-9z" fill="#fff"/><circle cx="9" cy="12.500" r="1.700" fill="#5865f2"/></svg><div class="absolute left-[24px] top-[19px] size-[14px] rounded-full bg-[#ee4b4b] text-[10px] leading-[14px] text-center">6</div><i class="absolute left-[5px] bottom-0 h-[2px] w-[40px] bg-[#76b9ed]"></i></div>

  <div class="ml-auto flex items-center text-xs tracking-[-0.3px]">
    <svg class="w-[12px] h-[7px]" viewBox="0 0 12 7" fill="none" stroke="#fff" stroke-width="1.300"><path d="M.5 6.500L6 1l5.500 5.500"/></svg>
    <svg class="w-[11px] h-[16px] ml-[12px]" viewBox="0 0 11 16"><rect x="2" width="7" height="11" fill="#fff"/><path d="M.5 8v4.500h10V8M5.500 12.500V15.500M3 15.500h5" fill="none" stroke="#fff"/></svg>
    <svg class="w-[17px] h-[12px] ml-[11px]" viewBox="0 0 17 12" fill="none" stroke="#fff"><path d="M5.500 2.500h9.500v8H3V6M15.500 4.500v4M1 0v2M4 0v2M.5 2.500h4v2h-4zM2.500 4v4"/><path d="M7 4.500h6.500v4H5.500z" fill="#fff" stroke="none"/></svg>
    <svg class="w-[17px] h-[14px] ml-[7px]" viewBox="0 0 17 14" fill="none" stroke="#fff"><path d="M.5 4.500h2.500l3.500-3.500v12L3 9.500H.5zM9 4.500q1.500 2.500 0 5"/><path d="M11.500 3q2.500 4 0 8M14 1.500q3 5.500 0 11" stroke="#999"/></svg>
    <svg class="size-[14px] ml-[9px]" viewBox="0 0 14 14" fill="none" stroke="#e4e4e4"><path d="M1 13Q1.500 2 13 1.500M4 13Q4.500 5 13 4.500M7 13Q7.500 8 13 7.500"/><circle cx="11.500" cy="12" r="1.200" fill="#fff"/></svg>
    <span class="ml-[10px] w-[26px]">ENG</span>
    <div class="ml-[6px] w-[60px] text-center leading-[18px] tracking-[-0.65px]"><div>13:22</div><div>08.10.2021</div></div>
    <svg class="w-[17px] h-[17px] ml-[16px]" viewBox="0 0 17 17" fill="none" stroke="#fff" stroke-width="1.200"><path d="M.7.700h15.600v12H11l-2.500 2.800L6 12.700H.7z"/></svg>
    <div class="ml-[19px] mr-1 h-10 w-px bg-[#7a7a7a]"></div>
  </div>
</div>
</body>
</html>
